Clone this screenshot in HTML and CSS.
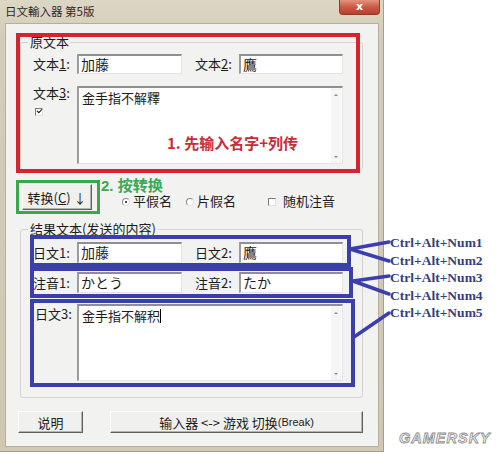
FILE: index.html
```html
<!DOCTYPE html>
<html lang="zh">
<head>
<meta charset="utf-8">
<title>日文輸入器 第5版</title>
<link rel="stylesheet" href="styles.css">
</head>
<body>
<div class="page">
  <div class="window">
    <div class="titlebar">
      <span class="title">日文輸入器 第5版</span>
      <span class="close">x</span>
    </div>
    <div class="client">
      <fieldset class="group g1">
        <legend>原文本</legend>
        <div class="row r1">
          <span class="lbl">文本<u>1</u>:</span><div class="field">加藤</div>
          <span class="lbl lbl2">文本<u>2</u>:</span><div class="field f2">鷹</div>
        </div>
        <div class="row rarea r2">
          <div class="lblcol"><span class="lbl">文本<u>3</u>:</span><span class="check checked"></span></div>
          <div class="area a1"><span class="atext">金手指不解釋</span><div class="scroll"><span class="up"></span><span class="down"></span></div></div>
        </div>
      </fieldset>

      <div class="actions">
        <div class="btn convert">转换(<u>C</u>) ↓</div>
        <div class="opts">
          <span class="radio on"></span><span class="otext">平假名</span>
          <span class="radio r-2"></span><span class="otext">片假名</span>
          <span class="check c-2"></span><span class="otext">随机注音</span>
        </div>
      </div>

      <fieldset class="group g2">
        <legend>结果文本(发送的内容)</legend>
        <div class="row r3">
          <span class="lbl">日文1:</span><div class="field">加藤</div>
          <span class="lbl lbl2">日文2:</span><div class="field f2">鷹</div>
        </div>
        <div class="row r4">
          <span class="lbl">注音1:</span><div class="field">かとう</div>
          <span class="lbl lbl2">注音2:</span><div class="field f2">たか</div>
        </div>
        <div class="row rarea r5">
          <div class="lblcol"><span class="lbl l3">日文3:</span></div>
          <div class="area a2"><span class="atext">金手指不解积<i class="caret"></i></span><div class="scroll"><span class="up"></span><span class="down"></span></div></div>
        </div>
      </fieldset>

      <div class="bottom">
        <div class="btn help">说明</div>
        <div class="btn switch">输入器 &lt;-&gt; 游戏 切换<span class="lat">(Break)</span></div>
      </div>
    </div>
  </div>

  <div class="notes">
    <div class="note">Ctrl+Alt+Num1</div>
    <div class="note">Ctrl+Alt+Num2</div>
    <div class="note">Ctrl+Alt+Num3</div>
    <div class="note">Ctrl+Alt+Num4</div>
    <div class="note">Ctrl+Alt+Num5</div>
    <div class="wm">GAMERSKY</div>
  </div>
</div>

<div class="box red-box"></div>
<div class="box green-box"></div>
<div class="box blue-box b1"></div>
<div class="box blue-box b2"></div>
<div class="box blue-box b3"></div>
<div class="tip tip-red">1. 先输入名字+列传</div>
<div class="tip tip-green">2. 按转换</div>
<svg class="links" width="500" height="454" viewBox="0 0 500 454">
  <g stroke="#3b3fae" stroke-width="3.5" stroke-linecap="round" fill="none">
    <path d="M350 249 L389 242 M350 249 L389 261"/>
    <path d="M353 281 L389 276 M353 281 L389 294"/>
    <path d="M354 337 L389 313"/>
  </g>
</svg>
</body>
</html>
```

FILE: styles.css
```css
html, body {
  margin: 0;
  padding: 0;
}
body {
  width: 500px;
  height: 454px;
  background: #ffffff;
  font-family: "Noto Sans CJK SC", "Noto Sans", sans-serif;
  font-size: 13px;
  color: #1c1c1c;
  position: relative;
  overflow: hidden;
}
u { text-decoration: underline; text-underline-offset: 1px; }

.page {
  display: flex;
  height: 454px;
}

/* window frame */
.window {
  width: 384px;
  height: 452px;
  box-sizing: border-box;
  background: linear-gradient(#dcd6c5, #d4ccb8 40px, #d0c8b3);
  border-right: 1px solid #a69e8a;
  border-bottom: 1px solid #a69e8a;
  display: flex;
  flex-direction: column;
}
.titlebar {
  height: 23px;
  display: flex;
  justify-content: space-between;
  align-items: flex-start;
  padding-left: 5px;
}
.title {
  font-family: "Noto Sans CJK TC", "Noto Sans CJK SC", sans-serif;
  font-size: 11.5px;
  line-height: 23px;
  color: #2a2a2a;
}
.close {
  width: 41px;
  height: 15px;
  margin-right: 3px;
  box-sizing: border-box;
  border: 1px solid #8e3a2c;
  border-top: none;
  border-radius: 0 0 4px 4px;
  background: linear-gradient(#e3937e, #cc5a44 50%, #b8402c);
  color: #fff;
  font-family: "DejaVu Sans", sans-serif;
  font-weight: bold;
  font-size: 11px;
  line-height: 13px;
  text-align: center;
}

.client {
  flex: 1;
  margin: 0 4px 4px 5px;
  background: #f2f2f0;
  border: 1px solid #b7af9a;
  display: flex;
  flex-direction: column;
}

/* group boxes */
.group {
  margin: 0 15px 0 14px;
  padding: 0;
  border: 1px solid #d3d2cc;
  border-radius: 3px;
  min-width: 0;
}
.group legend {
  margin-left: 7px;
  padding: 0 2px;
  font-size: 13px;
  line-height: 16px;
  color: #1c1c1c;
}
.g1 { margin-top: 10px; padding-bottom: 5px; }
.g2 { margin-top: 11px; padding-bottom: 16px; }

.row {
  display: flex;
  align-items: center;
  padding-left: 12px;
}
.r1 { margin-top: 4px; height: 20px; }
.r2 { margin-top: 12px; }
.r3 { margin-top: 5px; height: 21px; }
.r4 { margin-top: 9px; height: 21px; }
.r5 { margin-top: 11px; }
.rarea { align-items: flex-start; }

.lbl {
  width: 44px;
  flex: none;
  white-space: nowrap;
  line-height: 16px;
}
.lbl2 { margin-left: 13px; }
.lblcol {
  width: 44px;
  flex: none;
  display: flex;
  flex-direction: column;
}
.lblcol .lbl { margin-top: -1px; }
.lblcol .l3 { margin-left: 2px; margin-top: 2px; }

.field {
  width: 105px;
  height: 100%;
  box-sizing: border-box;
  background: #fff;
  border-top: 2px solid #8f8f8f;
  border-left: 2px solid #9c9c9c;
  border-right: 1px solid #e4e4e4;
  border-bottom: 1px solid #e4e4e4;
  padding-left: 2px;
  font-size: 14px;
  line-height: 17px;
  white-space: nowrap;
}
.f2 { width: 104px; }

.area {
  width: 266px;
  box-sizing: border-box;
  background: #fff;
  border-top: 2px solid #8f8f8f;
  border-left: 2px solid #9c9c9c;
  border-right: 1px solid #e4e4e4;
  border-bottom: 1px solid #e4e4e4;
  display: flex;
  justify-content: space-between;
}
.a1 { height: 78px; }
.a2 { height: 77px; }
.atext {
  padding: 1px 0 0 3px;
  font-size: 13px;
  line-height: 17px;
}
.caret {
  display: inline-block;
  width: 1px;
  height: 14px;
  background: #000;
  vertical-align: -2px;
}
.scroll {
  width: 10px;
  background: #f5f5f5;
  display: flex;
  flex-direction: column;
  justify-content: space-between;
  align-items: center;
  padding: 6px 0 5px;
  margin-right: 1px;
}
.up, .down {
  width: 0;
  height: 0;
  border-left: 2px solid transparent;
  border-right: 2px solid transparent;
}
.up { border-bottom: 2px solid #8a8a8a; }
.down { border-top: 2px solid #8a8a8a; }

/* check & radio */
.check {
  display: inline-block;
  width: 8px;
  height: 8px;
  box-sizing: border-box;
  border-top: 1px solid #7a7a7a;
  border-left: 1px solid #7a7a7a;
  border-right: 1px solid #e0e0e0;
  border-bottom: 1px solid #e0e0e0;
  background: #fff;
  position: relative;
}
.lblcol .check { margin: 7px 0 0 2px; }
.checked::after {
  content: "";
  position: absolute;
  left: 1px;
  top: 0px;
  width: 4px;
  height: 2px;
  border-left: 1.5px solid #111;
  border-bottom: 1.5px solid #111;
  transform: rotate(-45deg);
}
.radio {
  display: inline-block;
  width: 8px;
  height: 8px;
  box-sizing: border-box;
  border-radius: 50%;
  border: 1px solid;
  border-color: #8a8a8a #e2e2e2 #e2e2e2 #8a8a8a;
  background: #fff;
  position: relative;
}
.radio.on::after {
  content: "";
  position: absolute;
  left: 2px;
  top: 2px;
  width: 2px;
  height: 2px;
  border-radius: 50%;
  background: #111;
}

/* action row */
.actions {
  margin-top: 14px;
  display: flex;
  align-items: flex-end;
  padding-left: 16px;
  height: 26px;
}
.btn {
  box-sizing: border-box;
  background: #f0f0ee;
  border-top: 1px solid #fff;
  border-left: 1px solid #fff;
  border-right: 1px solid #5e5e5e;
  border-bottom: 1px solid #5e5e5e;
  box-shadow: inset -1px -1px #b4b4b4;
  display: flex;
  align-items: center;
  justify-content: center;
  white-space: nowrap;
}
.convert {
  width: 70px;
  height: 26px;
  font-size: 13px;
}
.opts {
  display: flex;
  align-items: center;
  margin-left: 30px;
  margin-bottom: 1px;
  height: 14px;
}
.otext {
  margin-left: 3px;
  line-height: 14px;
  font-family: "Liberation Sans", "Noto Sans CJK SC", sans-serif;
}
.r-2 { margin-left: 14px; }
.c-2 { margin-left: 32px; }
.opts .c-2 + .otext { margin-left: 7px; }

/* bottom buttons */
.bottom {
  margin-top: 13px;
  display: flex;
  padding-left: 12px;
}
.help { width: 65px; height: 22px; }
.switch { width: 253px; height: 22px; margin-left: 27px; }
.lat {
  font-family: "Liberation Sans", sans-serif;
  font-size: 11px;
}

/* right side notes */
.notes {
  margin-left: 6px;
  padding-top: 234px;
  display: flex;
  flex-direction: column;
  flex: 1;
}
.note {
  font-family: "Liberation Serif", serif;
  font-weight: bold;
  font-size: 13.5px;
  line-height: 17.5px;
  color: #343f7e;
  white-space: nowrap;
}
.wm {
  margin-top: auto;
  margin-bottom: 8px;
  margin-left: 9px;
  font-family: "Liberation Sans", sans-serif;
  font-style: italic;
  font-weight: bold;
  font-size: 14.5px;
  letter-spacing: 1px;
  line-height: 16px;
  color: #f4f4f4;
  -webkit-text-stroke: 0.8px #8c8c8c;
}

/* annotation overlays */
.box {
  position: absolute;
  box-sizing: border-box;
  pointer-events: none;
}
.red-box {
  left: 16px; top: 33px; width: 344px; height: 140px;
  border: 4px solid #d8222e;
}
.green-box {
  left: 16px; top: 180px; width: 84px; height: 34px;
  border: 3px solid #37a84c;
}
.blue-box { border: 4px solid #3b3fae; }
.b1 { left: 30px; top: 235px; width: 321px; height: 32px; }
.b2 { left: 30px; top: 267px; width: 323px; height: 31px; }
.b3 { left: 30px; top: 299px; width: 325px; height: 88px; }
.tip {
  position: absolute;
  font-weight: bold;
  font-size: 15px;
  white-space: nowrap;
}
.tip-red { left: 167px; top: 134px; line-height: 18px; color: #c82c3a; }
.tip-green {
  left: 101px; top: 178px; line-height: 15px; color: #3aa854;
  font-family: "Liberation Sans", "Noto Sans CJK SC", sans-serif;
}
.links {
  position: absolute;
  left: 0;
  top: 0;
  pointer-events: none;
}
```
